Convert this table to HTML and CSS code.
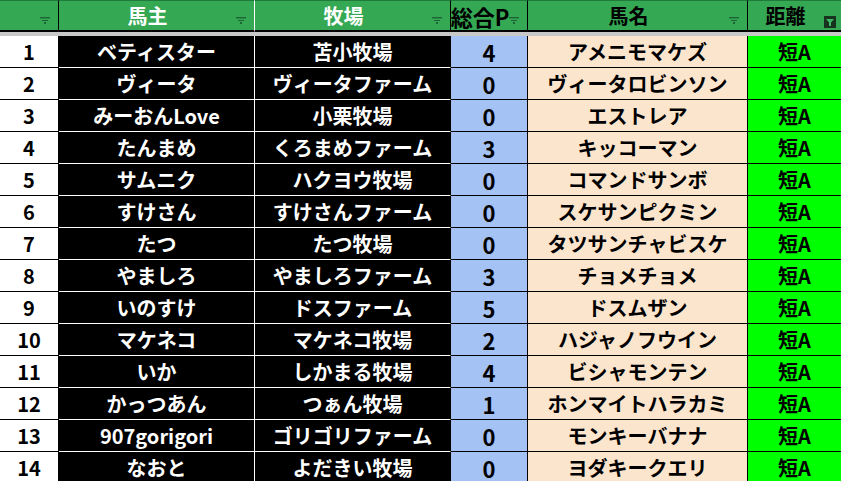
FILE: index.html
```html
<!DOCTYPE html>
<html lang="ja">
<head>
<meta charset="utf-8">
<link rel="stylesheet" href="styles.css">
</head>
<body>
<div class="sheet">
  <div class="row head">
    <div class="cell h c-no"><span class="flt"><svg width="10" height="8" viewBox="0 0 10 8"><rect x="0" y="0" width="10" height="1" fill="#1d6534"/><rect x="0" y="1" width="10" height="1" fill="#2a8a47"/><rect x="2" y="3" width="6" height="1" fill="#1d6534"/><rect x="4" y="5" width="2" height="2" fill="#1d6534"/></svg></span></div>
    <div class="cell h c-owner">馬主<span class="flt"><svg width="10" height="8" viewBox="0 0 10 8"><rect x="0" y="0" width="10" height="1" fill="#1d6534"/><rect x="0" y="1" width="10" height="1" fill="#2a8a47"/><rect x="2" y="3" width="6" height="1" fill="#1d6534"/><rect x="4" y="5" width="2" height="2" fill="#1d6534"/></svg></span></div>
    <div class="cell h c-farm">牧場<span class="flt"><svg width="10" height="8" viewBox="0 0 10 8"><rect x="0" y="0" width="10" height="1" fill="#1d6534"/><rect x="0" y="1" width="10" height="1" fill="#2a8a47"/><rect x="2" y="3" width="6" height="1" fill="#1d6534"/><rect x="4" y="5" width="2" height="2" fill="#1d6534"/></svg></span></div>
    <div class="cell h c-pt">総合P<span class="flt"><svg width="10" height="8" viewBox="0 0 10 8"><rect x="0" y="0" width="10" height="1" fill="#1d6534"/><rect x="0" y="1" width="10" height="1" fill="#2a8a47"/><rect x="2" y="3" width="6" height="1" fill="#1d6534"/><rect x="4" y="5" width="2" height="2" fill="#1d6534"/></svg></span></div>
    <div class="cell h c-horse">馬名<span class="flt"><svg width="10" height="8" viewBox="0 0 10 8"><rect x="0" y="0" width="10" height="1" fill="#1d6534"/><rect x="0" y="1" width="10" height="1" fill="#2a8a47"/><rect x="2" y="3" width="6" height="1" fill="#1d6534"/><rect x="4" y="5" width="2" height="2" fill="#1d6534"/></svg></span></div>
    <div class="cell h c-dist">距離<span class="flt-on"><svg width="12" height="12" viewBox="0 0 12 12"><rect x="0" y="0" width="12" height="12" fill="#17321f"/><polygon points="2,3 10,3 7,6.5 7,10 5,10 5,6.5" fill="#3fb565"/></svg></span></div>
  </div>
  <div class="sep"></div>

  <div class="row"><div class="cell c-no">1</div><div class="cell c-owner">ベティスター</div><div class="cell c-farm">苫小牧場</div><div class="cell c-pt">4</div><div class="cell c-horse">アメニモマケズ</div><div class="cell c-dist">短A</div></div>
  <div class="row"><div class="cell c-no">2</div><div class="cell c-owner">ヴィータ</div><div class="cell c-farm">ヴィータファーム</div><div class="cell c-pt">0</div><div class="cell c-horse">ヴィータロビンソン</div><div class="cell c-dist">短A</div></div>
  <div class="row"><div class="cell c-no">3</div><div class="cell c-owner">みーおんLove</div><div class="cell c-farm">小栗牧場</div><div class="cell c-pt">0</div><div class="cell c-horse">エストレア</div><div class="cell c-dist">短A</div></div>
  <div class="row"><div class="cell c-no">4</div><div class="cell c-owner">たんまめ</div><div class="cell c-farm">くろまめファーム</div><div class="cell c-pt">3</div><div class="cell c-horse">キッコーマン</div><div class="cell c-dist">短A</div></div>
  <div class="row"><div class="cell c-no">5</div><div class="cell c-owner">サムニク</div><div class="cell c-farm">ハクヨウ牧場</div><div class="cell c-pt">0</div><div class="cell c-horse">コマンドサンボ</div><div class="cell c-dist">短A</div></div>
  <div class="row"><div class="cell c-no">6</div><div class="cell c-owner">すけさん</div><div class="cell c-farm">すけさんファーム</div><div class="cell c-pt">0</div><div class="cell c-horse">スケサンピクミン</div><div class="cell c-dist">短A</div></div>
  <div class="row"><div class="cell c-no">7</div><div class="cell c-owner">たつ</div><div class="cell c-farm">たつ牧場</div><div class="cell c-pt">0</div><div class="cell c-horse">タツサンチャビスケ</div><div class="cell c-dist">短A</div></div>
  <div class="row"><div class="cell c-no">8</div><div class="cell c-owner">やましろ</div><div class="cell c-farm">やましろファーム</div><div class="cell c-pt">3</div><div class="cell c-horse">チョメチョメ</div><div class="cell c-dist">短A</div></div>
  <div class="row"><div class="cell c-no">9</div><div class="cell c-owner">いのすけ</div><div class="cell c-farm">ドスファーム</div><div class="cell c-pt">5</div><div class="cell c-horse">ドスムザン</div><div class="cell c-dist">短A</div></div>
  <div class="row"><div class="cell c-no">10</div><div class="cell c-owner">マケネコ</div><div class="cell c-farm">マケネコ牧場</div><div class="cell c-pt">2</div><div class="cell c-horse">ハジャノフウイン</div><div class="cell c-dist">短A</div></div>
  <div class="row"><div class="cell c-no">11</div><div class="cell c-owner">いか</div><div class="cell c-farm">しかまる牧場</div><div class="cell c-pt">4</div><div class="cell c-horse">ビシャモンテン</div><div class="cell c-dist">短A</div></div>
  <div class="row"><div class="cell c-no">12</div><div class="cell c-owner">かっつあん</div><div class="cell c-farm">つぁん牧場</div><div class="cell c-pt">1</div><div class="cell c-horse">ホンマイトハラカミ</div><div class="cell c-dist">短A</div></div>
  <div class="row"><div class="cell c-no">13</div><div class="cell c-owner">907gorigori</div><div class="cell c-farm">ゴリゴリファーム</div><div class="cell c-pt">0</div><div class="cell c-horse">モンキーバナナ</div><div class="cell c-dist">短A</div></div>
  <div class="row"><div class="cell c-no">14</div><div class="cell c-owner">なおと</div><div class="cell c-farm">よだきい牧場</div><div class="cell c-pt">0</div><div class="cell c-horse">ヨダキークエリ</div><div class="cell c-dist">短A</div></div>
</div>
</body>
</html>
```

FILE: styles.css
```css
html, body {
  margin: 0;
  padding: 0;
  background: #ffffff;
  overflow: hidden;
}
.sheet {
  width: 841px;
  font-family: "Noto Sans CJK JP", "Noto Sans", sans-serif;
  font-weight: 700;
  font-size: 20px;
  color: #000;
}
.row {
  display: grid;
  grid-template-columns: 59px 196px 196px 77px 220px 93px;
  height: 32px;
}
.cell {
  box-sizing: border-box;
  height: 32px;
  border-right: 1px solid #000;
  border-bottom: 1px solid #000;
  display: flex;
  align-items: center;
  justify-content: center;
  line-height: 1;
  white-space: nowrap;
  position: relative;
}
.head .cell {
  background: #34a853;
  border-top: 1px solid #1f7a3b;
  border-bottom: 2px solid #000;
  padding-right: 18px;
  padding-top: 1px;
}
.head .c-dist { border-right: none; }
.sep {
  height: 4px;
  background: #c8c8c8;
}
.flt {
  position: absolute;
  right: 8px;
  bottom: 5px;
  width: 10px;
  height: 8px;
  display: block;
}
.flt svg, .flt-on svg { display: block; }
.flt-on {
  position: absolute;
  right: 5px;
  bottom: 2px;
  width: 12px;
  height: 12px;
}
.c-no { background: #fff; }
.c-owner, .c-farm {
  background: #000;
  color: #fff;
  border-bottom-color: #fff;
}
.c-owner { border-right-color: #000; }
.c-farm { border-right-color: #000; }
.c-owner { border-right: 1px solid #fff; }
.c-pt {
  background: #a4c2f4;
  font-size: 22px;
}
.c-horse { background: #fce5cd; }
.c-dist {
  background: #00ff00;
  border-right: none;
}
```
